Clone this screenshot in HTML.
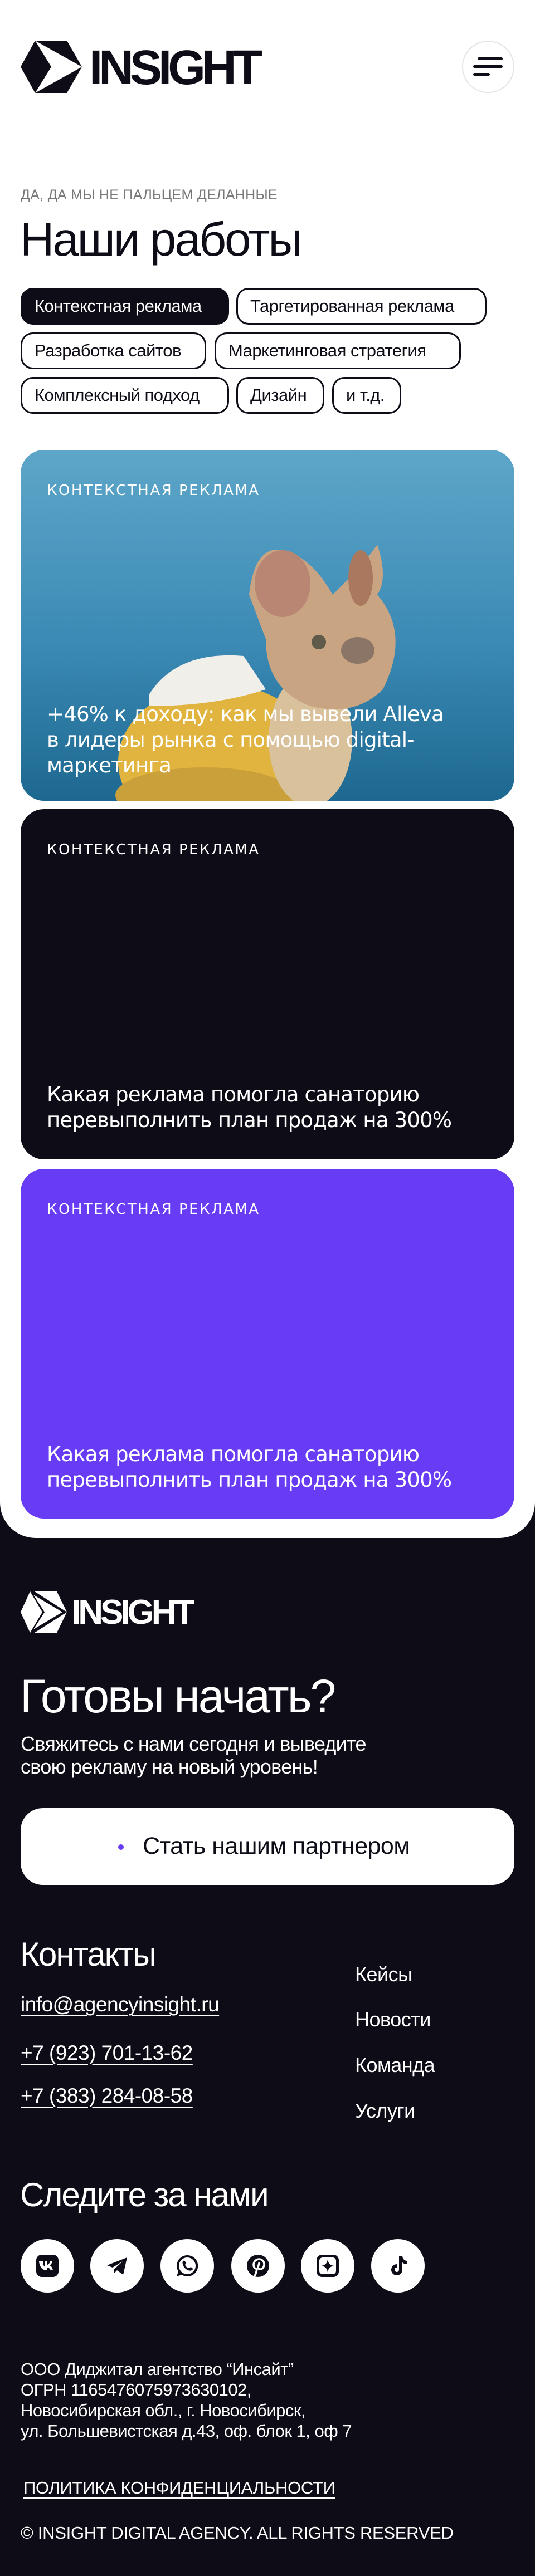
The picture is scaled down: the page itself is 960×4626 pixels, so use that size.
<!DOCTYPE html>
<html><head><meta charset="utf-8">
<style>
*{margin:0;padding:0;box-sizing:border-box}
body{width:960px;height:4626px;background:#0e0d17;font-family:"Liberation Sans",sans-serif;position:relative;overflow:hidden}
.a{position:absolute;white-space:nowrap}
.top{position:absolute;left:0;top:0;width:960px;height:2762px;background:#fff;border-radius:0 0 64px 64px}
.chip{position:absolute;height:66px;border:3px solid #0e0d17;border-radius:22px;font-size:31px;line-height:60px;padding-left:22px;color:#0e0d17;letter-spacing:-0.5px}
.card{position:absolute;left:37px;width:886px;border-radius:42px;overflow:hidden;color:#fff}
.lab{position:absolute;left:47px;font-family:"DejaVu Sans",sans-serif;font-size:26px;letter-spacing:2.5px}
.ttl{position:absolute;left:47px;font-family:"DejaVu Sans",sans-serif;font-size:37px;line-height:46px;letter-spacing:-0.8px;white-space:nowrap}
.w{color:#fff}
.soc{position:absolute;top:4021px;width:96px;height:96px;border-radius:50%;background:#fff}
.soc svg{position:absolute;left:24px;top:24px}
.u{text-decoration:underline;text-underline-offset:7px;text-decoration-thickness:2px}
</style></head><body>
<div class="top"></div>
<svg class="a" style="left:0;top:0" width="160" height="200">
<polygon points="37,120 63,73 120,73 147,120 120,167 63,167" fill="#0e0d17"/>
<polygon points="63,73 147,120 63,167 92,120" fill="#fff"/>
</svg>
<div class="a" style="left:160px;top:72px;font-size:87px;font-weight:bold;letter-spacing:-7px;color:#0e0d17">INSIGHT</div>
<div class="a" style="left:829px;top:73px;width:94px;height:94px;border:2px solid #e4e4e4;border-radius:50%"></div>
<div class="a" style="top:103px;height:5px;background:#0e0d17;border-radius:3px;left:857px;width:45px"></div>
<div class="a" style="left:849px;top:117px;width:53px;height:5px;background:#0e0d17;border-radius:3px"></div>
<div class="a" style="left:849px;top:131px;width:30px;height:5px;background:#0e0d17;border-radius:3px"></div>

<div class="a" style="left:37px;top:336px;font-size:25px;color:#777;letter-spacing:0.3px">ДА, ДА МЫ НЕ ПАЛЬЦЕМ ДЕЛАННЫЕ</div>
<div class="a" style="left:36px;top:382px;font-size:85px;letter-spacing:-3px;color:#0e0d17">Наши работы</div>

<div class="chip" style="left:37px;top:517px;width:374px;background:#0e0d17;color:#fff">Контекстная реклама</div>
<div class="chip" style="left:424px;top:517px;width:449px">Таргетированная реклама</div>
<div class="chip" style="left:37px;top:597px;width:333px">Разработка сайтов</div>
<div class="chip" style="left:385px;top:597px;width:442px">Маркетинговая стратегия</div>
<div class="chip" style="left:37px;top:677px;width:374px">Комплексный подход</div>
<div class="chip" style="left:424px;top:677px;width:158px">Дизайн</div>
<div class="chip" style="left:596px;top:677px;width:124px">и т.д.</div>

<div class="card" style="top:808px;height:630px;background:linear-gradient(180deg,#5ea6c9 0%,#3b8ab5 55%,#1d6890 100%)">
<svg class="a" style="left:0;top:0" width="886" height="630">
<ellipse cx="355" cy="560" rx="180" ry="140" fill="#e0b43f"/>
<ellipse cx="330" cy="620" rx="160" ry="50" fill="#caa03a"/>
<path d="M230 440 Q280 360 400 370 L440 430 Q350 460 230 460Z" fill="#f1efe9"/>
<ellipse cx="520" cy="520" rx="75" ry="120" fill="#d9c19c"/>
<path d="M410 260 Q420 170 470 180 Q520 190 560 260 Q620 200 640 170 Q660 230 640 260 Q700 330 650 430 Q600 480 520 460 Q440 430 440 340Z" fill="#c9a482"/>
<ellipse cx="470" cy="240" rx="50" ry="60" fill="#b88672"/>
<ellipse cx="610" cy="230" rx="22" ry="50" fill="#a9785e"/>
<circle cx="535" cy="345" r="13" fill="#5f5a4a"/>
<ellipse cx="605" cy="360" rx="30" ry="24" fill="#8a7566"/>
</svg>
<div class="lab" style="top:58px">КОНТЕКСТНАЯ РЕКЛАМА</div>
<div class="ttl" style="top:452px">+46% к доходу: как мы вывели Alleva<br>в лидеры рынка с помощью digital-<br>маркетинга</div>
</div>

<div class="card" style="top:1453px;height:629px;background:#0e0d17">
<div class="lab" style="top:58px">КОНТЕКСТНАЯ РЕКЛАМА</div>
<div class="ttl" style="top:490px">Какая реклама помогла санаторию<br>перевыполнить план продаж на 300%</div>
</div>

<div class="card" style="top:2099px;height:628px;background:#673cf4">
<div class="lab" style="top:58px">КОНТЕКСТНАЯ РЕКЛАМА</div>
<div class="ttl" style="top:490px">Какая реклама помогла санаторию<br>перевыполнить план продаж на 300%</div>
</div>

<svg class="a" style="left:0;top:2850px" width="130" height="90">
<polygon points="37,45 54,8 102,8 120,45 102,82 54,82" fill="#fff"/>
<polygon points="54,8 120,45 54,82 76,45" fill="#0e0d17"/>
<polygon points="60,14 112,45 60,76 80,45" fill="#fff"/>
<polygon points="54,8 62,8 120,45 112,45" fill="#0e0d17"/>
<polygon points="54,82 62,82 120,45 112,45" fill="#0e0d17"/>
</svg>
<div class="a w" style="left:128px;top:2860px;font-size:62px;font-weight:bold;letter-spacing:-5px">INSIGHT</div>

<div class="a w" style="left:36px;top:2998px;font-size:84px;letter-spacing:-3px">Готовы начать?</div>
<div class="a w" style="left:37px;top:3111px;font-size:36px;line-height:41px;letter-spacing:-0.7px">Свяжитесь с нами сегодня и выведите<br>свою рекламу на новый уровень!</div>
<div class="a" style="left:37px;top:3247px;width:886px;height:138px;background:#fff;border-radius:40px"></div>
<div class="a" style="left:212px;top:3312px;width:10px;height:10px;border-radius:50%;background:#673cf4"></div>
<div class="a" style="left:256px;top:3291px;font-size:43px;color:#0e0d17;letter-spacing:-0.5px">Стать нашим партнером</div>

<div class="a w" style="left:36px;top:3475px;font-size:60px;letter-spacing:-2px">Контакты</div>
<div class="a w u" style="left:37px;top:3579px;font-size:37px;letter-spacing:-0.5px">info@agencyinsight.ru</div>
<div class="a w u" style="left:37px;top:3666px;font-size:37px;letter-spacing:-0.5px">+7 (923) 701-13-62</div>
<div class="a w u" style="left:37px;top:3743px;font-size:37px;letter-spacing:-0.5px">+7 (383) 284-08-58</div>
<div class="a w" style="left:637px;top:3525px;font-size:36px;letter-spacing:-0.5px">Кейсы</div>
<div class="a w" style="left:637px;top:3606px;font-size:36px;letter-spacing:-0.5px">Новости</div>
<div class="a w" style="left:637px;top:3688px;font-size:36px;letter-spacing:-0.5px">Команда</div>
<div class="a w" style="left:637px;top:3770px;font-size:36px;letter-spacing:-0.5px">Услуги</div>

<div class="a w" style="left:36px;top:3907px;font-size:60px;letter-spacing:-2px">Следите за нами</div>

<div class="soc" style="left:37px"><svg width="48" height="48" viewBox="0 0 48 48"><rect x="4" y="4" width="40" height="40" rx="10" fill="#0e0d17"/><path d="M12 16h4c0 6 2 9 4 10v-10h4v6c2 0 4-3 5-6h4c-1 4-4 7-5 7 2 1 5 3 6 9h-4c-1-3-4-5-6-5v5h-1c-8 0-13-6-14-16z" fill="#fff"/></svg></div>
<div class="soc" style="left:162px"><svg width="48" height="48" viewBox="0 0 48 48"><path d="M6 23 L42 9 L35 40 L24 32 L19 37 L19 30 L34 16 L16 27Z" fill="#0e0d17"/></svg></div>
<div class="soc" style="left:288px"><svg width="48" height="48" viewBox="0 0 48 48"><path d="M24 5a19 19 0 0 0-16 29l-3 9 9-3A19 19 0 1 0 24 5z" fill="#0e0d17"/><circle cx="24" cy="24" r="15" fill="#fff"/><path d="M17 15c2-1 3 0 4 3s-2 3 0 6 4 4 6 4 2-3 5-1 2 4 0 5c-4 2-10-1-13-5s-5-10-2-12z" fill="#0e0d17"/></svg></div>
<div class="soc" style="left:415px"><svg width="48" height="48" viewBox="0 0 48 48"><circle cx="24" cy="24" r="20" fill="#0e0d17"/><path d="M22 30c-1 5-2 9-4 12M20 29c-3-1-4-4-4-7 0-6 5-10 10-10s9 4 9 9-3 9-7 9c-2 0-4-1-4-3l2-8" stroke="#fff" stroke-width="3.5" fill="none" stroke-linecap="round"/></svg></div>
<div class="soc" style="left:540px"><svg width="48" height="48" viewBox="0 0 48 48"><rect x="4" y="4" width="40" height="40" rx="10" fill="#0e0d17"/><rect x="9" y="9" width="30" height="30" rx="6" fill="#fff"/><path d="M24 12 Q25 23 36 24 Q25 25 24 36 Q23 25 12 24 Q23 23 24 12z" fill="#0e0d17"/></svg></div>
<div class="soc" style="left:666px"><svg width="48" height="48" viewBox="0 0 48 48"><path d="M26 6h6c0 5 4 9 8 9v6c-3 0-6-1-8-3v13a10 10 0 1 1-10-10v6a4 4 0 1 0 4 4z" fill="#0e0d17"/></svg></div>

<div class="a w" style="left:37px;top:4236px;font-size:31px;line-height:37px;letter-spacing:-0.5px">ООО Диджитал агентство “Инсайт”<br>ОГРН 1165476075973630102,<br>Новосибирская обл., г. Новосибирск,<br>ул. Большевистская д.43, оф. блок 1, оф 7</div>
<div class="a w u" style="left:42px;top:4450px;font-size:31px;letter-spacing:-0.3px">ПОЛИТИКА КОНФИДЕНЦИАЛЬНОСТИ</div>
<div class="a w" style="left:37px;top:4531px;font-size:31px;letter-spacing:-0.3px">© INSIGHT DIGITAL AGENCY. ALL RIGHTS RESERVED</div>
</body></html>
